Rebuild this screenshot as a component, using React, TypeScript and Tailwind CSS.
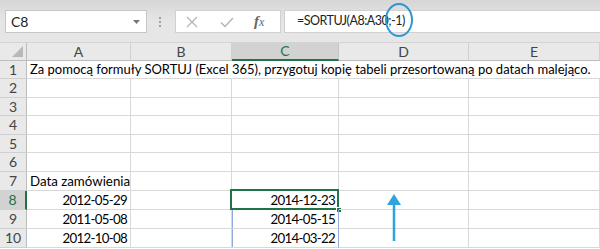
import React from "react";

const cols = ["A", "B", "C", "D", "E"];
const rowHeights = [18, 19, 18, 19, 18, 19, 19, 19, 19, 19];

function Cell({
  children,
  right,
  className = "",
}: {
  children?: React.ReactNode;
  right?: boolean;
  className?: string;
}) {
  return (
    <div
      className={`relative flex items-end border-r border-b border-[#d9d9d9] px-[3px] pb-[2px] leading-none overflow-visible whitespace-nowrap ${
        right ? "justify-end tracking-[-0.7px]" : "justify-start"
      } ${className}`}
    >
      {children}
    </div>
  );
}

export default function App() {
  const rows: React.ReactNode[] = [];
  for (let r = 1; r <= 10; r++) {
    const sel = r === 8;
    const h = rowHeights[r - 1];
    rows.push(
      <div
        key={`rh${r}`}
        className={`flex items-center justify-center border-b border-[#d0d0d0] text-[14px] leading-none ${
          sel
            ? "bg-[#d2d2d2] text-[#217346] border-r-2 border-r-[#217346]"
            : "bg-[#e9e9e9] text-[#444] border-r border-r-[#bcbcbc]"
        }`}
        style={{ height: h }}
      >
        {r}
      </div>
    );
    if (r === 1) {
      rows.push(
        <div
          key="r1"
          className="col-span-5 flex items-end border-b border-[#d9d9d9] px-[3px] pb-[2px] whitespace-nowrap leading-none text-[13px]"
        >
          Za pomocą formuły SORTUJ (Excel 365), przygotuj kopię tabeli przesortowaną po datach malejąco.
        </div>
      );
      continue;
    }
    const a =
      r === 7 ? "Data zamówienia" : r === 8 ? "2012-05-29" : r === 9 ? "2011-05-08" : r === 10 ? "2012-10-08" : "";
    const c = r === 8 ? "2014-12-23" : r === 9 ? "2014-05-15" : r === 10 ? "2014-03-22" : "";
    rows.push(
      <Cell key={`a${r}`} right={r >= 8}>
        {a}
      </Cell>
    );
    rows.push(<Cell key={`b${r}`} />);
    rows.push(
      <Cell
        key={`c${r}`}
        right={r >= 8}
        className={r >= 9 ? "border-r-[#8fa9dc] shadow-[inset_1px_0_0_#8fa9dc]" : ""}
      >
        {c}
        {r === 8 && (
          <>
            <div className="absolute left-[-2px] top-[-2px] right-[-1px] bottom-[-1px] border-2 border-[#217346] pointer-events-none" />
            <div className="absolute right-[-4px] bottom-[-4px] w-[6px] h-[6px] bg-[#217346] border border-white" />
          </>
        )}
      </Cell>
    );
    rows.push(<Cell key={`d${r}`} />);
    rows.push(<Cell key={`e${r}`} />);
  }

  return (
    <div
      className="relative w-[600px] h-[249px] overflow-hidden bg-white text-[#000] text-[13.3px]"
      style={{ fontFamily: "Lato, 'Noto Sans', sans-serif" }}
    >
      {/* formula bar */}
      <div className="h-[43px] bg-gradient-to-b from-[#d6d6d6] via-[#e6e6e6] to-[#e6e6e6] flex items-start pt-[10px] border-b border-[#d4d4d4]">
        <div className="ml-[5px] w-[142px] h-[23px] bg-white border border-[#c6c6c6] flex items-center justify-between pl-[5px] pr-[6px]">
          <span className="text-[14px] text-[#222] leading-none">C8</span>
          <svg width="7" height="4" viewBox="0 0 7 4">
            <path d="M0 0 L7 0 L3.5 4 Z" fill="#777" />
          </svg>
        </div>
        <div className="ml-[12px] h-[23px] flex flex-col justify-center gap-[2px]">
          <div className="w-[2px] h-[2px] bg-[#a0a0a0]" />
          <div className="w-[2px] h-[2px] bg-[#a0a0a0]" />
          <div className="w-[2px] h-[2px] bg-[#a0a0a0]" />
        </div>
        <div className="ml-[14px] w-[106px] h-[23px] bg-white border border-[#d0d0d0] flex items-center">
          <svg width="14" height="14" viewBox="0 0 14 14" className="ml-[9px]">
            <path d="M2 2 L12 12 M12 2 L2 12" stroke="#b5b5b5" strokeWidth="1.3" />
          </svg>
          <svg width="16" height="14" viewBox="0 0 16 14" className="ml-[20px]">
            <path d="M2 7.5 L6 11.5 L14 3" stroke="#b5b5b5" strokeWidth="1.5" fill="none" />
          </svg>
          <span
            className="ml-[19px] text-[15px] italic text-[#666] leading-none"
            style={{ fontFamily: "'Liberation Serif', serif" }}
          >
            <span className="font-semibold">f</span>
            <span className="text-[12px]">x</span>
          </span>
        </div>
        <div className="ml-[3px] flex-1 h-[23px] bg-white border border-[#d0d0d0] border-r-0 flex items-center pl-[12px]">
          <span className="text-[12.5px] tracking-[-0.5px] text-[#222] leading-none">
            =SORTUJ(A8:A30
            <span className="relative">
              ;-1)
              <svg
                className="absolute left-[-3px] top-[-10px] overflow-visible"
                width="28"
                height="34"
                viewBox="0 0 28 34"
              >
                <ellipse cx="14" cy="17" rx="13" ry="16" stroke="#2e96d2" strokeWidth="2" fill="none" />
              </svg>
            </span>
          </span>
        </div>
      </div>

      {/* grid */}
      <div className="grid grid-cols-[27px_104px_101px_107px_130px_131px]">
        <div className="h-[18px] bg-[#e9e9e9] border-r border-b border-[#bcbcbc] relative">
          <svg className="absolute right-[3px] bottom-[3px]" width="11" height="11" viewBox="0 0 11 11">
            <path d="M11 0 L11 11 L0 11 Z" fill="#b8b8b8" />
          </svg>
        </div>
        {cols.map((c) => (
          <div
            key={c}
            className={`h-[18px] flex items-center justify-center text-[14px] leading-none ${
              c === "C"
                ? "bg-[#d2d2d2] text-[#217346] border-b-2 border-b-[#217346] border-r border-r-[#c4c4c4]"
                : "bg-[#e9e9e9] text-[#444] border-b border-b-[#bcbcbc] border-r border-r-[#d0d0d0]"
            }`}
          >
            {c}
          </div>
        ))}
        {rows}
      </div>

      {/* arrow */}
      <svg className="absolute left-[384px] top-[193px]" width="20" height="50" viewBox="0 0 20 50">
        <path d="M10 10 L10 48" stroke="#2ea3dc" strokeWidth="2.5" />
        <path d="M3 12 L10 1 L17 12 Z" fill="#2ea3dc" />
      </svg>
    </div>
  );
}
